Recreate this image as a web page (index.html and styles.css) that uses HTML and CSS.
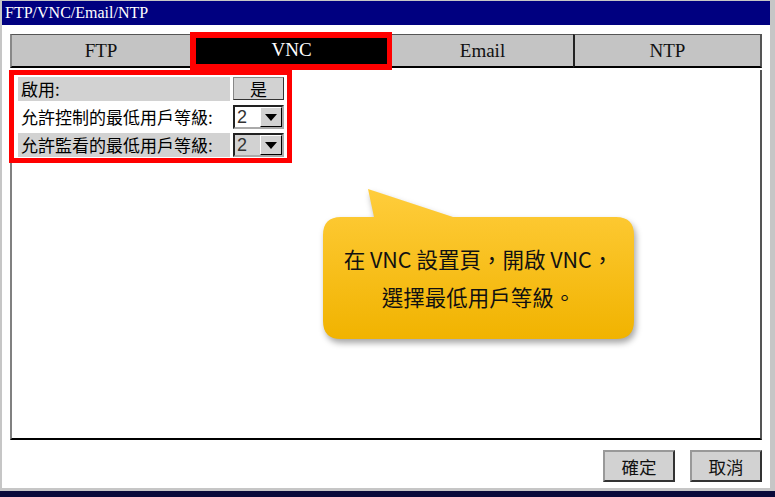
FILE: index.html
```html
<!DOCTYPE html>
<html lang="zh-Hant">
<head>
    <meta charset="UTF-8">
    <title>FTP/VNC/Email/NTP</title>
    <link rel="stylesheet" href="styles.css">
</head>
<body>
    <div class="window">
        <div class="titlebar">FTP/VNC/Email/NTP</div>

        <div class="content">
            <div class="tabs">
                <div class="tab tab-ftp">FTP</div>
                <div class="tab tab-vnc active">VNC</div>
                <div class="tab tab-email">Email</div>
                <div class="tab tab-ntp">NTP</div>
            </div>

            <div class="panel">
                <div class="settings">
                    <div class="row">
                        <div class="label shaded">啟用:</div>
                        <button class="toggle">是</button>
                    </div>
                    <div class="row">
                        <div class="label">允許控制的最低用戶等級:</div>
                        <div class="select">
                            <span class="value">2</span>
                            <span class="arrow"></span>
                        </div>
                    </div>
                    <div class="row">
                        <div class="label shaded">允許監看的最低用戶等級:</div>
                        <div class="select disabled">
                            <span class="value">2</span>
                            <span class="arrow"></span>
                        </div>
                    </div>
                </div>

                <!-- annotation bubble over the panel -->
                <svg class="bubble" width="325" height="165" viewBox="0 0 325 165">
                    <defs>
                        <linearGradient id="bubbleFill" x1="0" y1="0" x2="0" y2="1">
                            <stop offset="0" stop-color="#ffcd3c"/>
                            <stop offset="1" stop-color="#f1b300"/>
                        </linearGradient>
                    </defs>
                    <path d="M 23 33 L 56 33 L 50 5 L 135 33 L 298 33 Q 316 33 316 51 L 316 137 Q 316 155 298 155 L 23 155 Q 5 155 5 137 L 5 51 Q 5 33 23 33 Z" fill="url(#bubbleFill)"/>
                </svg>
                <div class="bubble-text">
                    <div>在 VNC 設置頁，開啟 VNC，</div>
                    <div>選擇最低用戶等級。</div>
                </div>
            </div>

            <div class="actions">
                <button class="btn">確定</button>
                <button class="btn">取消</button>
            </div>
        </div>
    </div>
    <div class="taskbar"></div>
</body>
</html>
```

FILE: styles.css
```css
body {
    margin: 0;
    width: 775px;
    height: 497px;
    overflow: hidden;
    background-color: #c6c6c6;
    font-family: "Noto Sans CJK TC", "Noto Sans", sans-serif;
}

.window {
    margin: 1px 5px 0 2px;
}

.titlebar {
    height: 24px;
    line-height: 24px;
    padding-left: 3px;
    background-color: #000080;
    color: #fff;
    font-family: "Liberation Serif", serif;
    font-size: 16px;
}

.content {
    height: 463px;
    box-sizing: border-box;
    padding: 9px 8px 0 8px;
    background: #fff;
}

.tabs {
    display: flex;
    height: 34px;
}

.tab {
    box-sizing: border-box;
    height: 34px;
    background-color: #c4c4c4;
    border-top: 1px solid #555;
    border-bottom: 2px solid #000;
    border-left: 2px solid #222;
    font-family: "Liberation Serif", serif;
    font-size: 19px;
    color: #111;
    display: flex;
    align-items: center;
    justify-content: center;
}

.tab-ftp { width: 180px; border-left: 2px solid #888; }
.tab-vnc { width: 202px; }
.tab-email { width: 181px; border-left: none; }
.tab-ntp { width: 189px; border-right: 2px solid #555; }

.tab.active {
    position: relative;
    z-index: 1;
    height: 38px;
    margin-top: -2px;
    background-color: #000;
    color: #fff;
    border: 6px solid #ff0000;
    border-right-width: 5px;
    padding-bottom: 2px;
}

.panel {
    position: relative;
    height: 370px;
    box-sizing: border-box;
    border-left: 2px solid #808080;
    border-right: 2px solid #555;
    border-bottom: 2px solid #000;
}

.settings {
    width: 283px;
    box-sizing: border-box;
    margin: 2px 0 0 -3px;
    border: 5px solid #ff0000;
    padding: 2px 3px 1px 4px;
    display: flex;
    flex-direction: column;
    gap: 4px;
}

.row {
    display: flex;
    gap: 3px;
    height: 24px;
}

.label {
    width: 212px;
    box-sizing: border-box;
    padding-left: 3px;
    font-size: 17px;
    line-height: 24px;
    color: #000;
    white-space: nowrap;
}

.label.shaded {
    background-color: #d2d2d2;
}

.toggle {
    width: 51px;
    height: 23px;
    margin: 0;
    padding: 0;
    background-color: #d2d2d2;
    border: 1px solid #333;
    border-top-color: #888;
    border-left-color: #888;
    font-family: "Noto Sans CJK TC", sans-serif;
    font-size: 17px;
    line-height: 20px;
    color: #000;
}

.select {
    width: 51px;
    height: 24px;
    box-sizing: border-box;
    display: flex;
    background: #fff;
    border: 2px solid #222;
    border-right-color: #aaa;
    border-bottom-color: #aaa;
}

.select.disabled {
    background-color: #d2d2d2;
}

.select .value {
    flex: 1;
    padding-left: 2px;
    font-family: "Liberation Sans", sans-serif;
    font-size: 18px;
    line-height: 20px;
    color: #333;
}

.select .arrow {
    width: 22px;
    box-sizing: border-box;
    background: #d2d2d2;
    border: 1px solid #000;
    border-top-color: #fff;
    border-left-color: #fff;
    position: relative;
}

.select .arrow::after {
    content: "";
    position: absolute;
    left: 4px;
    top: 6px;
    border-left: 6px solid transparent;
    border-right: 6px solid transparent;
    border-top: 7px solid #000;
}

.bubble {
    position: absolute;
    left: 306px;
    top: 114px;
    filter: drop-shadow(2px 4px 3px rgba(0, 0, 0, 0.35));
}

.bubble-text {
    position: absolute;
    left: 311px;
    top: 147px;
    width: 311px;
    height: 122px;
    display: flex;
    flex-direction: column;
    justify-content: center;
    align-items: center;
    font-size: 21.5px;
    line-height: 38px;
    color: #111;
}

.actions {
    display: flex;
    justify-content: flex-end;
    gap: 15px;
    margin-top: 10px;
}

.btn {
    width: 72px;
    height: 32px;
    margin: 0;
    padding: 0;
    background-color: #d2d2d2;
    border: 2px solid #333;
    border-top-color: #999;
    border-left-color: #999;
    font-family: "Noto Sans CJK TC", sans-serif;
    font-size: 17.5px;
    color: #111;
}

.taskbar {
    margin-top: 3px;
    height: 6px;
    background-color: #0a0a3a;
}
```
